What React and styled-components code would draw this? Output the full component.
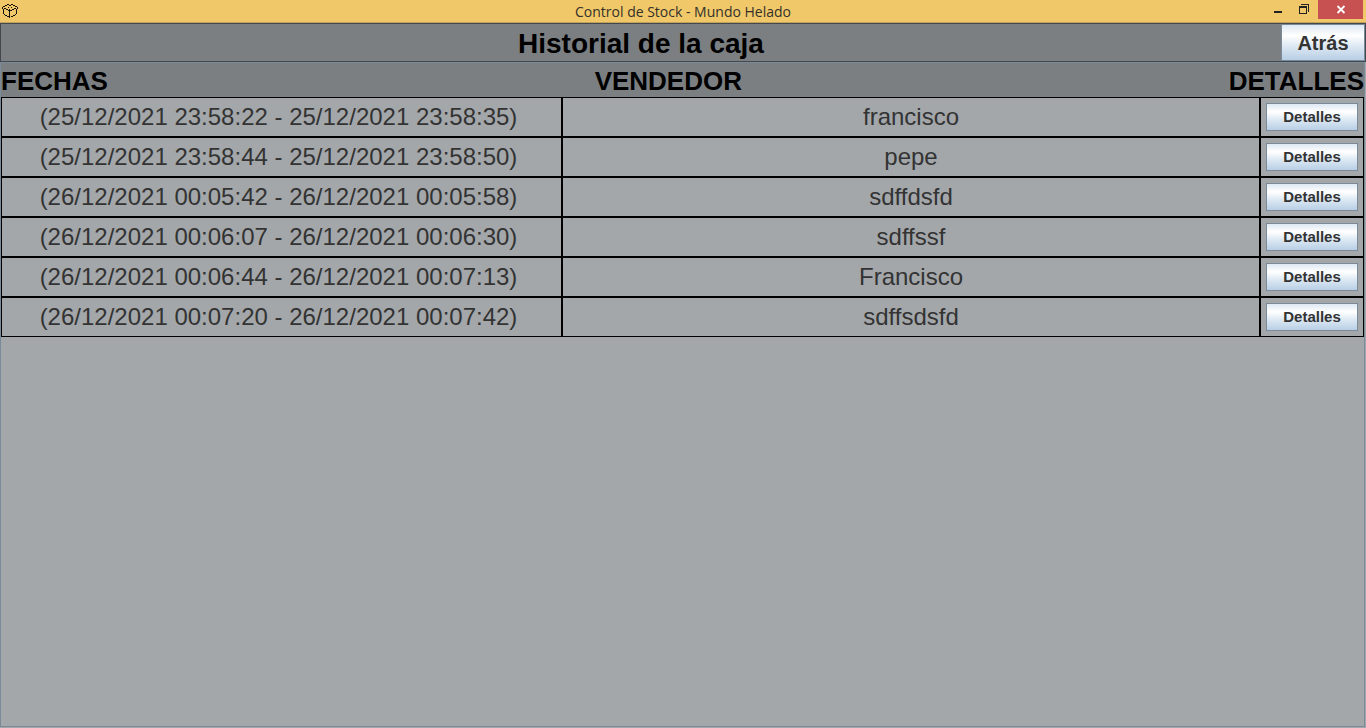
import React from "react";
import styled, { createGlobalStyle } from "styled-components";

const GlobalStyle = createGlobalStyle`
  *, *::before, *::after { box-sizing: border-box; }
  body {
    margin: 0;
    background: #a3a7aa;
    font-family: "Liberation Sans", Arial, sans-serif;
  }
`;

const Window = styled.div`
  display: flex;
  flex-direction: column;
  min-height: 100vh;
  background: #a3a7aa;
`;

const TitleBar = styled.header`
  display: grid;
  grid-template-columns: 1fr auto 1fr;
  height: 23px;
  background: #f0c869;
  border-bottom: 1px solid #c2a25a;
`;

const AppIcon = styled.svg`
  display: block;
  margin: 3px 0 0 2px;
`;

const WindowTitle = styled.span`
  font-family: "Open Sans", "Segoe UI", sans-serif;
  font-size: 14px;
  line-height: 24px;
  color: #33302a;
  white-space: nowrap;
`;

const WindowControls = styled.div`
  display: flex;
  justify-content: flex-end;
  padding-right: 3px;
`;

const ControlButton = styled.button`
  display: block;
  width: ${({ $close }) => ($close ? "45px" : "26px")};
  height: 19px;
  padding: 0;
  border: 0;
  background: ${({ $close }) => ($close ? "#c75050" : "transparent")};

  svg {
    display: block;
    margin: 0 auto;
  }
`;

const PageBar = styled.div`
  display: flex;
  align-items: stretch;
  height: 39px;
  background: #7b7f82;
  border: 1px solid #43484e;
`;

const PageTitle = styled.h1`
  flex: 1;
  margin: 0;
  font-size: 28px;
  line-height: 40px;
  text-align: center;
  color: #000;
`;

const OceanButton = styled.button`
  width: ${({ $large }) => ($large ? "84px" : "92px")};
  height: ${({ $large }) => ($large ? "auto" : "28px")};
  padding: ${({ $large }) => ($large ? "2px 0 0" : "0 0 2px")};
  border: 1px solid #7a8a99;
  background: linear-gradient(#dde8f3, #ffffff 30%, #dde8f3 60%, #b8cfe5);
  font-family: inherit;
  font-size: ${({ $large }) => ($large ? "20px" : "15px")};
  font-weight: bold;
  color: #333;
`;

const ScrollPane = styled.main`
  flex: 1;
  margin: 0 1px 1px 0;
  border: 1px solid #7a8a99;
`;

const HistoryTable = styled.table`
  display: block;
  width: 100%;
`;

const TableHead = styled.thead`
  display: block;
`;

const HeadRow = styled.tr`
  display: flex;
  justify-content: space-between;
  height: 34px;
  background: #7b7f82;
`;

const HeadCell = styled.th`
  padding: 0;
  font-size: 26px;
  line-height: 36px;
  color: #000;
`;

const TableBody = styled.tbody`
  display: block;
`;

const Row = styled.tr`
  display: grid;
  grid-template-columns: 561fr 698fr 104px;
  height: 40px;
`;

const Cell = styled.td`
  display: flex;
  align-items: center;
  justify-content: center;
  padding: ${({ $dates }) => ($dates ? "0 6px 0 0" : "0")};
  border: 1px solid #000;
  font-size: 24px;
  line-height: 28px;
  color: #333;
  white-space: nowrap;
`;

const sessions = [
  ["(25/12/2021 23:58:22 - 25/12/2021 23:58:35)", "francisco"],
  ["(25/12/2021 23:58:44 - 25/12/2021 23:58:50)", "pepe"],
  ["(26/12/2021 00:05:42 - 26/12/2021 00:05:58)", "sdffdsfd"],
  ["(26/12/2021 00:06:07 - 26/12/2021 00:06:30)", "sdffssf"],
  ["(26/12/2021 00:06:44 - 26/12/2021 00:07:13)", "Francisco"],
  ["(26/12/2021 00:07:20 - 26/12/2021 00:07:42)", "sdffsdsfd"],
];

export default function App() {
  return (
    <Window>
      <GlobalStyle />
      <TitleBar>
        <AppIcon width="16" height="16" viewBox="0 0 16 16" fill="none" stroke="#15130c" shapeRendering="crispEdges" aria-hidden="true">
          <path d="M5 1.500h2M9 1.500h2M3 2.500h2M7 2.500h2M11 2.500h2M1 3.500h2M13 3.500h2M.5 4v2M15.500 4v2M2 5.500h2M12 5.500h2M4 6.500h2M10 6.500h2M6 4.500h1M9 4.500h1" />
          <path d="M1.500 6v5M14.500 6v5M2 11.500h1M13 11.500h1M3 12.500h2M11 12.500h2M5 13.500h2M9 13.500h2M7.500 6v9M6 7.500h1M8 7.500h2" />
        </AppIcon>
        <WindowTitle>Control de Stock - Mundo Helado</WindowTitle>
        <WindowControls>
          <ControlButton aria-label="Minimizar">
            <svg width="26" height="19" viewBox="0 0 26 19">
              <path d="M8 11h8v2H8z" fill="#222" />
            </svg>
          </ControlButton>
          <ControlButton aria-label="Restaurar">
            <svg width="26" height="19" viewBox="0 0 26 19" fill="none" stroke="#222" shapeRendering="crispEdges">
              <path d="M7.500 6v7.500h7V6M9 4.500h7.500V12" />
              <path d="M7 7h8" strokeWidth="2" />
            </svg>
          </ControlButton>
          <ControlButton $close aria-label="Cerrar">
            <svg width="45" height="19" viewBox="0 0 45 19" fill="none" stroke="#fff" strokeWidth="1.8">
              <path d="m19.500 6 7 7m0-7-7 7" />
            </svg>
          </ControlButton>
        </WindowControls>
      </TitleBar>
      <PageBar>
        <PageTitle>Historial de la caja</PageTitle>
        <OceanButton $large>Atrás</OceanButton>
      </PageBar>
      <ScrollPane>
        <HistoryTable>
          <TableHead>
            <HeadRow>
              <HeadCell scope="col">FECHAS</HeadCell>
              <HeadCell scope="col">VENDEDOR</HeadCell>
              <HeadCell scope="col">DETALLES</HeadCell>
            </HeadRow>
          </TableHead>
          <TableBody>
            {sessions.map(([dates, seller]) => (
              <Row key={dates}>
                <Cell $dates>{dates}</Cell>
                <Cell>{seller}</Cell>
                <Cell>
                  <OceanButton>Detalles</OceanButton>
                </Cell>
              </Row>
            ))}
          </TableBody>
        </HistoryTable>
      </ScrollPane>
    </Window>
  );
}
